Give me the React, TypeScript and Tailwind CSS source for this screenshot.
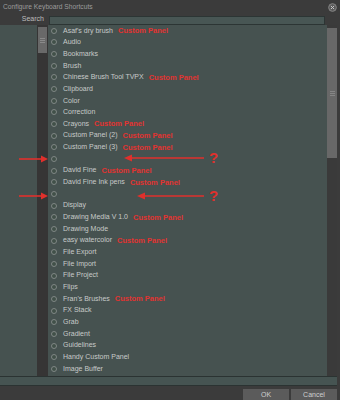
import React from "react";

type Row = { name: string; custom?: boolean };

const rows: Row[] = [
  { name: "Asaf's dry brush", custom: true },
  { name: "Audio" },
  { name: "Bookmarks" },
  { name: "Brush" },
  { name: "Chinese Brush Tool TVPX", custom: true },
  { name: "Clipboard" },
  { name: "Color" },
  { name: "Correction" },
  { name: "Crayons", custom: true },
  { name: "Custom Panel (2)", custom: true },
  { name: "Custom Panel (3)", custom: true },
  { name: "" },
  { name: "David Fine", custom: true },
  { name: "David Fine Ink pens", custom: true },
  { name: "" },
  { name: "Display" },
  { name: "Drawing Media V 1.0", custom: true },
  { name: "Drawing Mode" },
  { name: "easy watercolor", custom: true },
  { name: "File Export" },
  { name: "File Import" },
  { name: "File Project" },
  { name: "Flips" },
  { name: "Fran's Brushes", custom: true },
  { name: "FX Stack" },
  { name: "Grab" },
  { name: "Gradient" },
  { name: "Guidelines" },
  { name: "Handy Custom Panel" },
  { name: "Image Buffer" },
];

const RightArrow = ({ top }: { top: number }) => (
  <svg className="absolute left-[19px]" style={{ top }} width="30" height="8" viewBox="0 0 30 8">
    <line x1="0" y1="4" x2="24" y2="4" stroke="#e0302c" strokeWidth="1.6" />
    <path d="M22 0.5 L29 4 L22 7.5 Z" fill="#e0302c" />
  </svg>
);

const LeftArrow = ({ top, left, width }: { top: number; left: number; width: number }) => (
  <div className="absolute flex items-center" style={{ top, left }}>
    <svg width={width} height="8" viewBox={`0 0 ${width} 8`}>
      <path d="M0 4 L8 0.5 L8 7.5 Z" fill="#e0302c" />
      <line x1="6" y1="4" x2={width} y2="4" stroke="#e0302c" strokeWidth="1.6" />
    </svg>
    <span className="ml-[5px] text-[15px] font-bold leading-none text-[#e0302c]">?</span>
  </div>
);

export default function App() {
  return (
    <div
      className="relative flex h-[400px] w-[340px] flex-col overflow-hidden bg-[#3b3b3b] text-[7px]"
      style={{ fontFamily: '"Liberation Sans", Arial, sans-serif' }}
    >
      {/* Title */}
      <div className="flex h-[14px] items-center justify-between pl-[3px] pr-[3px]">
        <span className="text-[6.7px] text-[#9c9c9c]">Configure Keyboard Shortcuts</span>
        <svg width="9" height="9" viewBox="0 0 10 10">
          <circle cx="5" cy="5" r="4.3" fill="#5a5a5a" stroke="#8a8a8a" strokeWidth="1" />
          <path d="M3.2 3.2 L6.8 6.8 M6.8 3.2 L3.2 6.8" stroke="#c8c8c8" strokeWidth="1.1" />
        </svg>
      </div>

      {/* Search */}
      <div className="flex h-[11px] items-start">
        <span className="w-[45px] pr-[1px] text-right text-[7px] leading-[10px] text-[#bdbdbd]">Search</span>
        <div className="ml-[4px] mt-[2px] h-[9px] w-[276px] border border-[#2c3534] bg-[#485654]" />
      </div>

      {/* Main */}
      <div className="flex h-[351px]">
        <div className="w-[37px] bg-[#465250]" />
        <div className="flex w-[11px] flex-col bg-[#363535] px-[1px] pt-[2px]">
          <div className="flex h-[26px] flex-col items-center justify-center gap-[1px] bg-[#696969]">
            <div className="h-px w-[5px] bg-[#8a8a8a]" />
            <div className="h-px w-[5px] bg-[#8a8a8a]" />
            <div className="h-px w-[5px] bg-[#8a8a8a]" />
          </div>
        </div>
        <div className="flex-1 bg-[#465250]">
          {rows.map((r, i) => (
            <div key={i} className="flex h-[11.66px] items-center">
              <div className="ml-[3px] h-[6px] w-[6px] rounded-full border border-[#7f8785] bg-[#415049]" />
              <span className="ml-[6px] text-[7px] text-[#c6cac9]">{r.name}</span>
              {r.custom && (
                <span className="ml-[5px] text-[7.5px] font-bold text-[#e23330]">Custom Panel</span>
              )}
            </div>
          ))}
        </div>
        <div className="flex w-[10px] flex-col bg-[#3a3a3a] pt-[3px]">
          <div className="flex h-[130px] flex-col items-center justify-center gap-[1px] bg-[#686868]">
            <div className="h-px w-[5px] bg-[#858585]" />
            <div className="h-px w-[5px] bg-[#858585]" />
            <div className="h-px w-[5px] bg-[#858585]" />
          </div>
        </div>
        <div className="w-[3px]" />
      </div>

      {/* Horizontal strip */}
      <div className="h-[10px] w-[337px] border-y border-[#2b3332] bg-[#465452]" />

      {/* Buttons */}
      <div className="flex flex-1 items-end justify-end gap-[2px] pr-[3px]">
        <button className="h-[11px] w-[46px] bg-[#5b5b5b] text-[7px] leading-[11px] text-[#cfcfcf]">OK</button>
        <button className="h-[11px] w-[46px] bg-[#5b5b5b] text-[7px] leading-[11px] text-[#cfcfcf]">Cancel</button>
      </div>

      {/* Annotations */}
      <RightArrow top={155} />
      <RightArrow top={192} />
      <LeftArrow top={150} left={124} width={80} />
      <LeftArrow top={188} left={137} width={67} />
    </div>
  );
}
